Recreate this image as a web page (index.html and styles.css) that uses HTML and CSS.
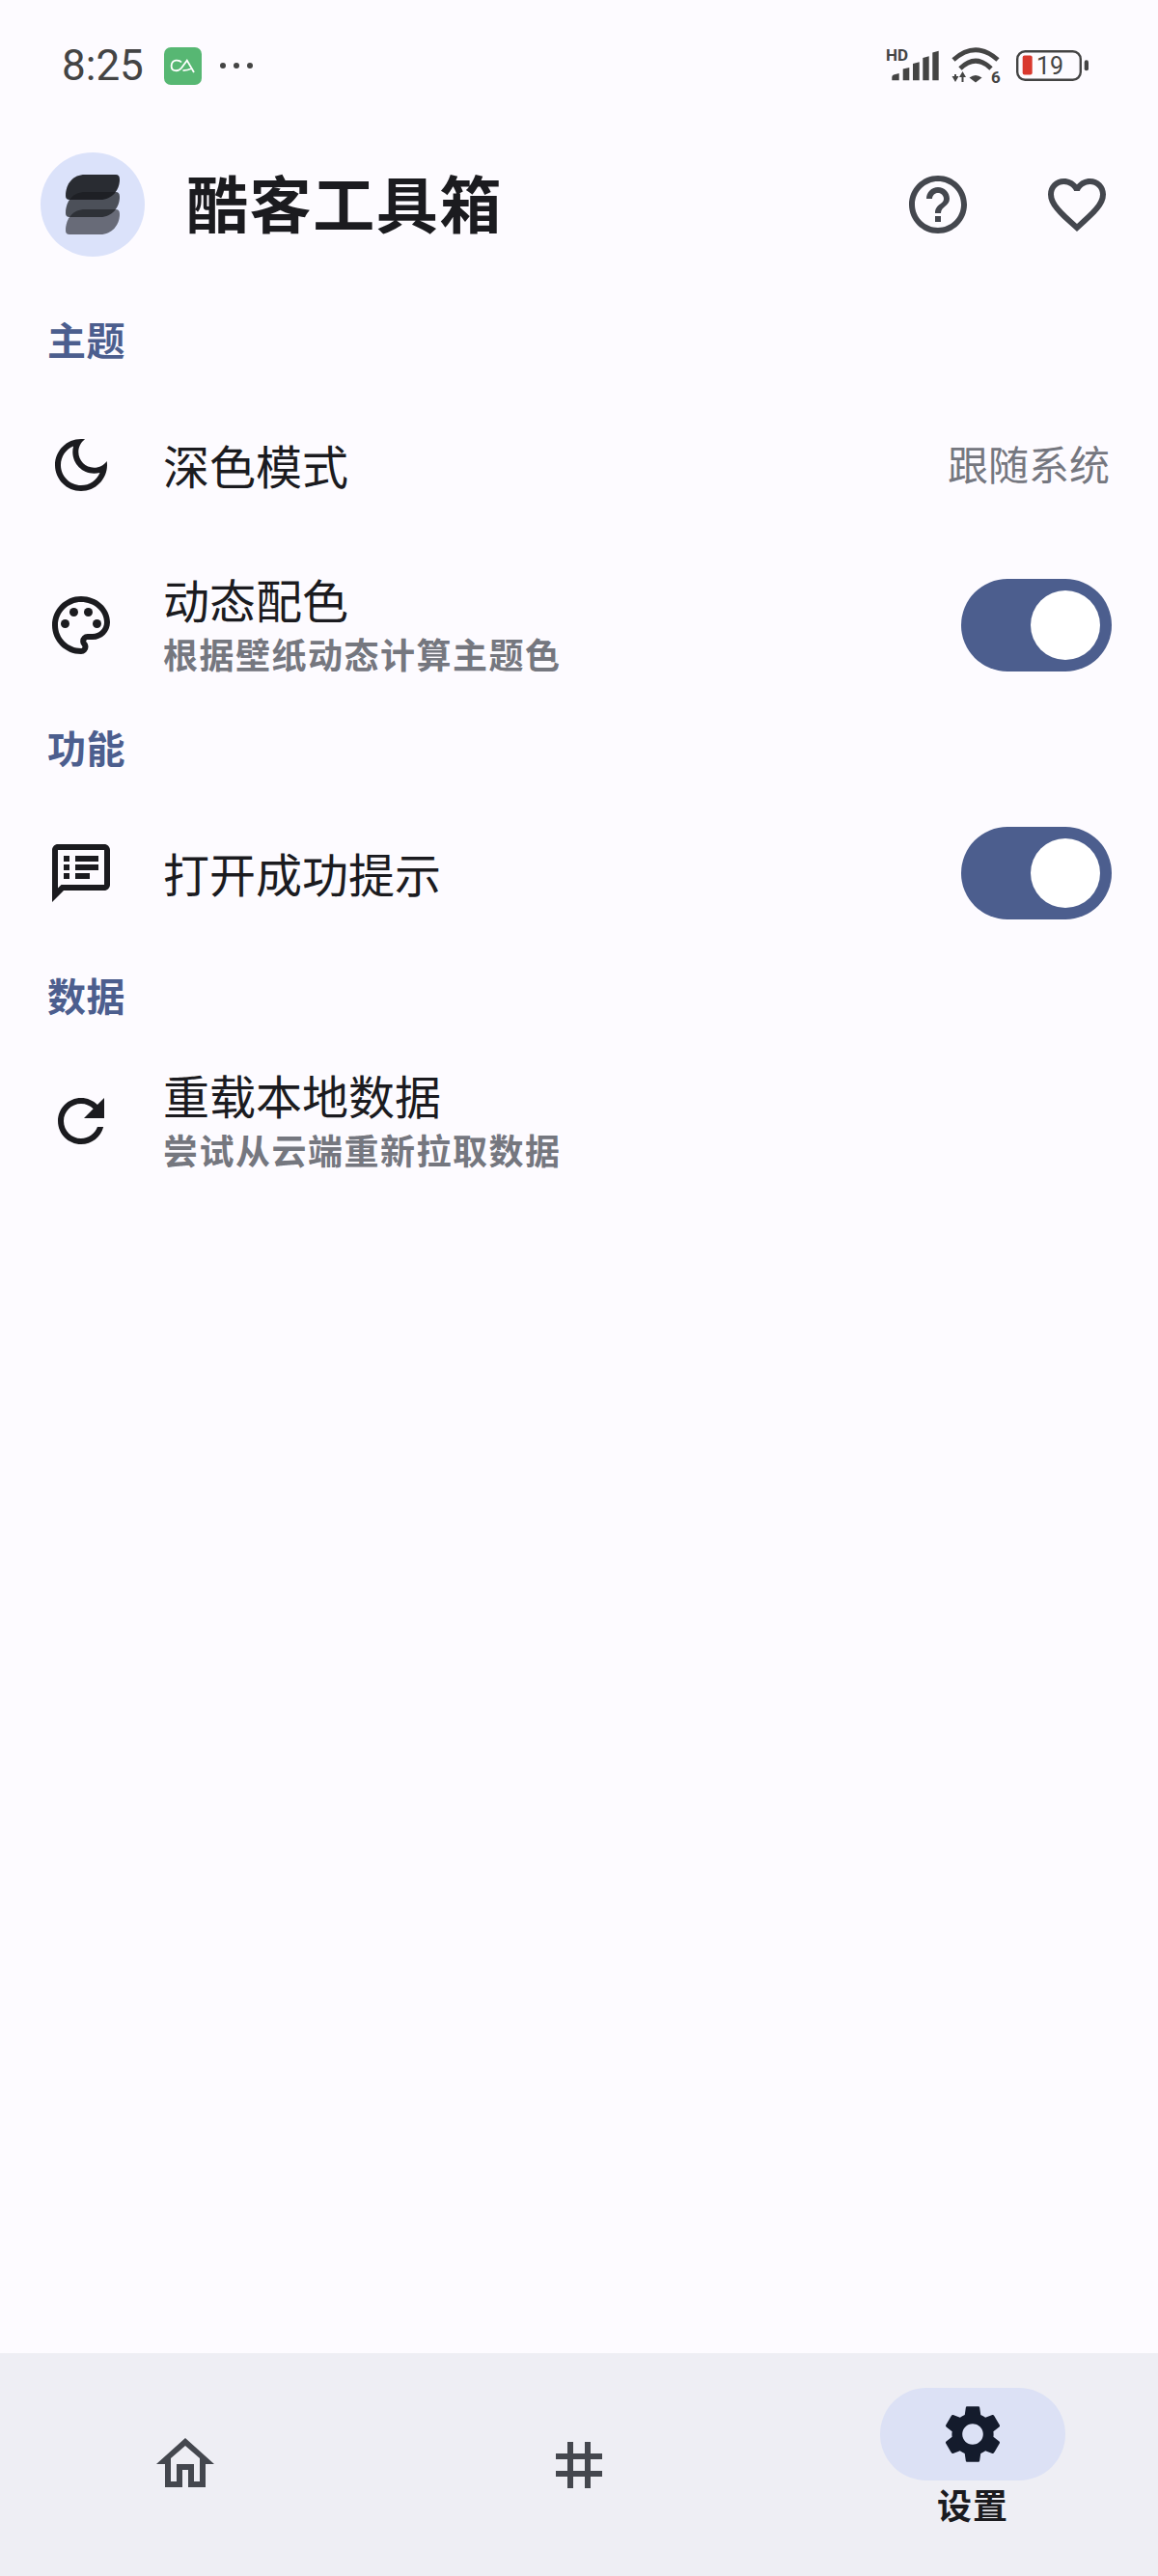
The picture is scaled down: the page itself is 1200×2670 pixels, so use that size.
FILE: index.html
```html
<!DOCTYPE html>
<html lang="zh">
<head>
<meta charset="utf-8">
<title>酷客工具箱</title>
<link rel="stylesheet" href="styles.css">
</head>
<body>
<div class="screen">
  <div class="status">
    <span class="time">8:25</span>
    <svg class="notif" viewBox="0 0 39 39"><rect width="39" height="39" rx="7" fill="#57b773"/><path d="M18 15.500C15.500 12.600 8 12.400 7.600 19.200C7.600 25.600 15 25.400 18 21.500L23.800 13.600L31 26M19.500 24.200C22 24 25 23.600 28.500 22" fill="none" stroke="#fff" stroke-width="1.800"/></svg>
    <div class="dots"><i></i><i></i><i></i></div>
    <div class="status-right">
      <svg class="sig" width="56" height="44" viewBox="0 0 56 44"><text x="0" y="17" class="hd">HD</text><path d="M6.300 37.300V34Q6.300 32 8 31.500L13.700 30V37.300ZM17.700 37.300V25.500L24.300 24V37.300ZM28 37.300V20L34.700 18.300V37.300ZM38.300 37.300V14L44.700 12.300V37.300ZM48.300 37.300V8.500L54.700 6.700V37.300Z" fill="#444"/></svg>
      <svg class="wifi" width="52" height="44" viewBox="0 0 52 44"><g transform="translate(0 3)"><path d="M2 13Q25 -7.400 48 13M9 22Q25 6.200 41 22" fill="none" stroke="#444" stroke-width="4.800"/><path d="M18.500 31.500Q25 26.500 31.500 31.500L25 36.500Z" fill="#444"/><path d="M3 30V28H5V30H7.500L4 36L.5 30ZM10.500 36V31H8L11.500 25L15 31H12.500V36Z" fill="#444"/></g><text x="41" y="40" class="six">6</text></svg>
      <svg class="batt" width="76" height="44" viewBox="0 0 76 44"><rect x="1.200" y="7.200" width="65.600" height="29.600" rx="8" fill="none" stroke="#444" stroke-width="2.400"/><rect x="6.700" y="11.500" width="10" height="20" rx="2" fill="#d9382e"/><text x="21" y="31" class="pct">19</text><rect x="70.700" y="16.300" width="4.300" height="11" rx="2.100" fill="#444"/></svg>
    </div>
  </div>

  <div class="appbar">
    <div class="logo">
      <svg width="56" height="62" viewBox="0 0 56 62"><g fill="#1a1c21"><path opacity=".6" d="M20 36H52Q56 36 56 41C56 52 48 62 36 62H4Q0 62 0 58C0 45 8 36 20 36Z"/><path opacity=".74" d="M20 18H52Q56 18 56 23C56 34 48 44 36 44H4Q0 44 0 40C0 27 8 18 20 18Z"/><path opacity=".92" d="M20 0H52Q56 0 56 5C56 16 48 26 36 26H4Q0 26 0 22C0 9 8 0 20 0Z"/></g></svg>
    </div>
    <h1 class="title">酷客工具箱</h1>
    <div class="actions">
      <svg class="icon tint" viewBox="0 0 24 24"><path d="M11 18h2v-2h-2v2zm1-16C6.480 2 2 6.480 2 12s4.480 10 10 10 10-4.480 10-10S17.520 2 12 2zm0 18c-4.410 0-8-3.590-8-8s3.590-8 8-8 8 3.590 8 8-3.590 8-8 8zm0-14c-2.210 0-4 1.790-4 4h2c0-1.100.9-2 2-2s2 .9 2 2c0 2-3 1.750-3 5h2c0-2.250 3-2.500 3-5 0-2.210-1.790-4-4-4z"/></svg>
      <svg class="icon tint" viewBox="0 0 24 24"><path d="M16.500 3c-1.740 0-3.410.81-4.500 2.090C10.910 3.810 9.240 3 7.500 3 4.420 3 2 5.420 2 8.500c0 3.780 3.400 6.860 8.550 11.540L12 21.350l1.450-1.320C18.600 15.360 22 12.280 22 8.500 22 5.420 19.580 3 16.500 3zm-4.400 15.550l-.1.1-.1-.1C7.140 14.240 4 11.390 4 8.500 4 6.500 5.500 5 7.500 5c1.540 0 3.040.99 3.570 2.360h1.870C13.460 5.990 14.960 5 16.500 5c2 0 3.500 1.500 3.500 3.500 0 2.890-3.140 5.740-7.900 10.050z"/></svg>
    </div>
  </div>

  <main class="content">
    <section class="section first">
      <h2 class="label">主题</h2>
      <div class="row">
        <svg class="icon dark" viewBox="0 0 24 24"><path d="M9.370 5.510c-.18.64-.27 1.310-.27 1.990 0 4.080 3.320 7.400 7.400 7.400.68 0 1.350-.09 1.990-.27C17.450 17.190 14.930 19 12 19c-3.860 0-7-3.140-7-7 0-2.930 1.810-5.450 4.370-6.490zM12 3c-4.970 0-9 4.030-9 9s4.030 9 9 9 9-4.030 9-9c0-.46-.04-.92-.1-1.360-.98 1.370-2.580 2.260-4.400 2.260-2.980 0-5.400-2.420-5.400-5.400 0-1.810.89-3.420 2.260-4.400-.44-.06-.9-.1-1.360-.1z"/></svg>
        <div class="text"><div class="name">深色模式</div></div>
        <span class="value">跟随系统</span>
      </div>
      <div class="row">
        <svg class="icon dark" viewBox="0 0 24 24"><path d="M12 22C6.490 22 2 17.510 2 12S6.490 2 12 2s10 4.040 10 9c0 3.310-2.690 6-6 6h-1.770c-.28 0-.5.22-.5.5 0 .12.05.23.13.33.41.47.64 1.060.64 1.670A2.500 2.500 0 0 1 12 22zm0-18c-4.410 0-8 3.590-8 8s3.590 8 8 8c.28 0 .5-.22.5-.5a.54.54 0 0 0-.14-.35c-.41-.46-.63-1.050-.63-1.650a2.500 2.500 0 0 1 2.500-2.500H16c2.210 0 4-1.790 4-4 0-3.860-3.590-7-8-7z"/><circle cx="6.500" cy="11.500" r="1.500"/><circle cx="9.500" cy="7.500" r="1.500"/><circle cx="14.500" cy="7.500" r="1.500"/><circle cx="17.500" cy="11.500" r="1.500"/></svg>
        <div class="text"><div class="name">动态配色</div><div class="sub">根据壁纸动态计算主题色</div></div>
        <div class="toggle"><span class="thumb"></span></div>
      </div>
    </section>

    <section class="section">
      <h2 class="label">功能</h2>
      <div class="row">
        <svg class="icon dark" viewBox="0 0 24 24"><path d="M20 2H4c-1.100 0-1.990.9-1.990 2L2 22l4-4h14c1.100 0 2-.9 2-2V4c0-1.100-.9-2-2-2zm0 14H5.170l-.59.59-.58.58V4h16v12zM6 12h2v2H6zm0-3h2v2H6zm0-3h2v2H6zm4 6h5v2h-5zm0-3h8v2h-8zm0-3h8v2h-8z"/></svg>
        <div class="text"><div class="name">打开成功提示</div></div>
        <div class="toggle"><span class="thumb"></span></div>
      </div>
    </section>

    <section class="section">
      <h2 class="label">数据</h2>
      <div class="row">
        <svg class="icon dark" viewBox="0 0 24 24"><path d="M17.650 6.350C16.200 4.900 14.210 4 12 4c-4.420 0-7.990 3.580-7.990 8s3.570 8 7.990 8c3.730 0 6.840-2.550 7.730-6h-2.080c-.82 2.330-3.040 4-5.650 4-3.310 0-6-2.690-6-6s2.690-6 6-6c1.660 0 3.140.69 4.220 1.780L13 11h7V4l-2.350 2.350z"/></svg>
        <div class="text"><div class="name">重载本地数据</div><div class="sub">尝试从云端重新拉取数据</div></div>
      </div>
    </section>
  </main>

  <nav class="nav">
    <div class="nav-item">
      <svg class="home" width="60" height="51" viewBox="0 0 60 51"><path fill-rule="evenodd" d="M30 0L60 27H51V51H33V33H27V51H9V27H0ZM30 8L15 21V45H21V27H39V45H45V21Z"/></svg>
    </div>
    <div class="nav-item">
      <svg class="icon tint" viewBox="0 0 24 24"><path d="M20 10V8h-4V4h-2v4h-4V4H8v4H4v2h4v4H4v2h4v4h2v-4h4v4h2v-4h4v-2h-4v-4h4zm-6 4h-4v-4h4v4z"/></svg>
    </div>
    <div class="nav-item active">
      <div class="pill">
        <svg class="icon gear" viewBox="0 0 24 24"><path d="M19.140 12.940c.04-.3.06-.61.06-.94 0-.32-.02-.64-.07-.94l2.030-1.580c.18-.14.23-.41.12-.61l-1.920-3.320c-.12-.22-.37-.29-.59-.22l-2.390.96c-.5-.38-1.030-.7-1.620-.94l-.36-2.540c-.04-.24-.24-.41-.48-.41h-3.840c-.24 0-.43.17-.47.41l-.36 2.540c-.59.24-1.130.57-1.620.94l-2.390-.96c-.22-.08-.47 0-.59.22L2.740 8.870c-.12.21-.08.47.12.61l2.030 1.580c-.05.3-.09.63-.09.94s.02.64.07.94l-2.030 1.580c-.18.14-.23.41-.12.61l1.920 3.320c.12.22.37.29.59.22l2.390-.96c.5.38 1.030.7 1.620.94l.36 2.540c.05.24.24.41.48.41h3.840c.24 0 .44-.17.47-.41l.36-2.540c.59-.24 1.130-.56 1.620-.94l2.390.96c.22.08.47 0 .59-.22l1.920-3.320c.12-.22.07-.47-.12-.61l-2.010-1.580zM12 15.600c-1.980 0-3.600-1.620-3.600-3.600s1.620-3.600 3.600-3.600 3.600 1.620 3.600 3.600-1.620 3.600-3.600 3.600z"/></svg>
      </div>
      <span class="nav-label">设置</span>
    </div>
  </nav>
</div>
</body>
</html>
```

FILE: styles.css
```css
* { box-sizing: border-box; }
html, body { margin: 0; padding: 0; }
body {
  background: #fdfbff;
  font-family: "Noto Sans CJK SC", "Noto Sans", sans-serif;
  color: #1b1b1f;
}
.screen { width: 1200px; height: 2670px; display: flex; flex-direction: column; overflow: hidden; }

/* status bar */
.status { height: 136px; flex: none; display: flex; align-items: center; padding: 0 71px 0 64px; }
.time { font-family: Roboto, sans-serif; font-size: 44px; color: #444; line-height: 52px; }
.notif { width: 39px; height: 39px; margin-left: 21px; }
.dots { display: flex; gap: 8px; margin-left: 19px; }
.dots i { width: 6px; height: 6px; border-radius: 50%; background: #444; display: block; }
.status-right { margin-left: auto; display: flex; align-items: center; height: 44px; }
.wifi { margin-left: 12px; }
.batt { margin-left: 15px; }
.hd { font: 700 17px Roboto, sans-serif; fill: #444; }
.six { font: 700 17px Roboto, sans-serif; fill: #444; }
.pct { font: 400 25px Roboto, sans-serif; fill: #444; }

/* app bar */
.appbar { height: 152px; flex: none; display: flex; align-items: center; padding: 0 48px 0 42px; }
.logo { width: 108px; height: 108px; border-radius: 50%; background: #dbe2fa; display: flex; align-items: center; justify-content: center; }
.title { margin: 0 0 8px 43px; font-size: 64px; font-weight: 700; line-height: 80px; letter-spacing: 1.6px; color: #1b1b1f; }
.actions { margin-left: auto; display: flex; gap: 72px; }

.icon { width: 72px; height: 72px; flex: none; display: block; }
.tint { fill: #44474e; }
.dark { fill: #1b1b1f; }
.gear { fill: #141b2c; }

/* settings list */
.content { flex: 1; }
.section { margin-top: 24px; }
.section.first { margin-top: 33px; }
.label { margin: 0 0 29px; padding-left: 49px; font-size: 40px; font-weight: 700; line-height: 60px; letter-spacing: .5px; color: #4c5e8e; }
.row { height: 144px; display: flex; align-items: center; padding: 0 48px; }
.row + .row { margin-top: 22px; }
.text { flex: 1; margin-left: 49px; padding-bottom: 3px; }
.name { font-size: 48px; line-height: 60px; color: #1b1b1f; }
.sub { margin-top: 1px; font-size: 36px; font-weight: 700; line-height: 52px; letter-spacing: 1.5px; color: #75777f; }
.value { font-size: 42px; line-height: 60px; color: #75777f; margin: 0 2px 4px 0; }
.toggle { width: 156px; height: 96px; border-radius: 48px; background: #4c5e8e; display: flex; align-items: center; justify-content: flex-end; padding-right: 12px; }
.thumb { width: 72px; height: 72px; border-radius: 50%; background: #fff; display: block; }

/* bottom nav */
.nav { height: 231px; flex: none; background: #eeeef4; display: flex; justify-content: space-between; align-items: flex-start; padding: 0 96px; }
.nav-item { width: 192px; height: 100%; display: flex; flex-direction: column; align-items: center; justify-content: center; }
.home { fill: #44474e; display: block; margin-bottom: 4px; }
.nav-item.active { justify-content: flex-start; padding-top: 36px; }
.pill { width: 192px; height: 96px; border-radius: 48px; background: #dce1f5; display: flex; align-items: center; justify-content: center; }
.nav-label { font-size: 36px; font-weight: 700; line-height: 52px; margin-top: -2px; letter-spacing: 1px; color: #1b1b1f; }
```
